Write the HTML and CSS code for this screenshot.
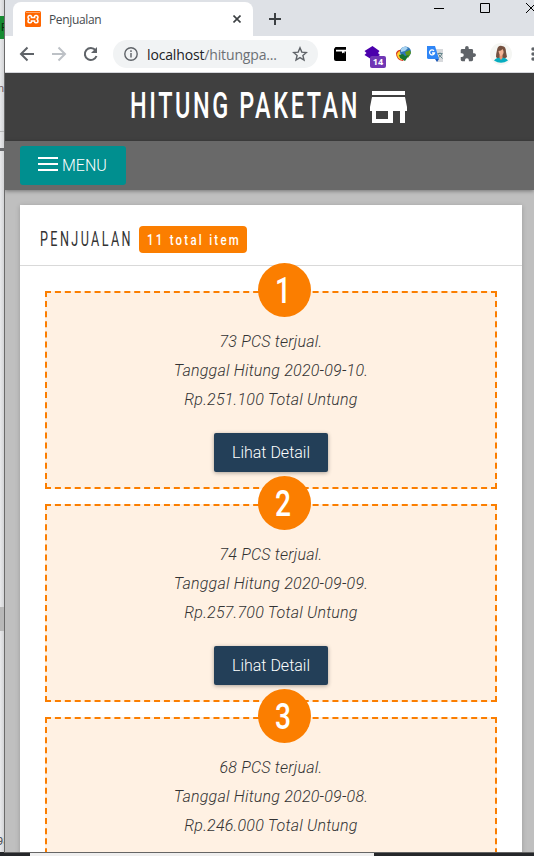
FILE: index.html
```html
<!DOCTYPE html>
<html lang="id">
<head>
<meta charset="utf-8">
<title>Penjualan</title>
<link rel="stylesheet" href="styles.css">
</head>
<body>
<div class="desktop">
  <div class="behind">
    <div class="behind-top"></div>
    <div class="behind-green">F</div>
    <div class="behind-mid">n</div>
    <div class="behind-rule"></div>
    <div class="behind-arrow"></div>
    <div class="behind-thumb"></div>
    <div class="behind-num">98</div>
  </div>
  <div class="window">
    <div class="tabstrip">
      <div class="tab">
        <svg class="favicon" width="16" height="16" viewBox="0 0 16 16"><rect width="16" height="16" rx="1.5" fill="#f60"/><path d="M1 1.500h14" stroke="#ffa365"/><path d="M5.500 4.500h-1q-1.500 0-1.500 1.700T4.500 8Q3 8.300 3 10t1.500 1.700h1Q6.500 11.700 6.500 10h3q0 1.700 1 1.700h1Q13 11.700 13 10t-1.500-2Q13 7.800 13 6.200t-1.500-1.700h-1q-1 0-1 2h-3q0-2-1-2Z" fill="none" stroke="#fff" stroke-width="1.600"/></svg>
        <span class="tab-title">Penjualan</span>
        <svg class="tab-close" width="8" height="8" viewBox="0 0 8 8"><path d="m.5.5 7 7m0-7-7 7" stroke="#3c4043" stroke-width="1.6"/></svg>
      </div>
      <svg class="newtab" width="12" height="12" viewBox="0 0 12 12"><path d="M6 0v12M0 6h12" stroke="#3c4043" stroke-width="2"/></svg>
      <svg class="controls" width="102" height="16" viewBox="0 0 102 16" fill="none" stroke="#000"><path d="M2 8.500h10M48.500 3.500h9v9h-9zM94 3l10 10m0-10-10 10"/></svg>
    </div>
    <div class="toolbar">
      <svg class="nav" width="80" height="20" viewBox="0 0 80 20" fill="none" stroke="#5f6368" stroke-width="2"><path d="M15 10H2m6.500-6.500L2 10l6.500 6.500"/><path d="M33 10h13m-6.500-6.500L46 10l-6.500 6.500" stroke="#bdc1c6"/><path d="M76.500 6.200A6 6 0 1 0 77.500 12"/><path d="M78 3v6h-6z" fill="#5f6368" stroke="none"/></svg>
      <div class="omnibox">
        <svg width="14" height="14" viewBox="0 0 14 14" fill="none" stroke="#5f6368" stroke-width="1.400"><circle cx="7" cy="7" r="6.200"/><path d="M7 6v4.500M7 3.300v1.600"/></svg>
        <span class="url">localhost<span class="path">/hitungpa...</span></span>
        <svg class="star" width="16" height="16" viewBox="0 0 16 16" fill="none" stroke="#5f6368" stroke-width="1.400"><path d="m8 1.800 1.800 4.300 4.600.4-3.500 3 1.100 4.500L8 11.600 4 14l1.100-4.500-3.500-3 4.600-.4z"/></svg>
      </div>
      <div class="exts">
        <svg width="12" height="14" viewBox="0 0 12 14"><path d="M1.500 0H12v14H2a2 2 0 0 1-2-2V2z"/><path d="M2 2.700h10v1.800h-1.500v2l-1.300-1-1.200 1v-2H2z" fill="#fff"/></svg>
        <div class="stack"><svg width="17" height="16" viewBox="0 0 17 16"><path d="m8.500 0 7 5-1.500 2 2 2-7.500 5L.5 9l2-2-2-2z" fill="#4b00ac"/></svg><span class="count">14</span></div>
        <svg class="globe" width="17" height="16" viewBox="0 0 17 16"><path d="M1 7q2-4 6-3L4 8l6 4-2 3Q1 14 1 7Z" fill="#d8341d"/><path d="M2 8q1-3 4-3L4.500 8 9 13l-2 1Q2 13 2 8Z" fill="#ffd22b"/><circle cx="10.500" cy="6" r="5.500" fill="#2f75b7"/><path d="M6 3q3-4 7-1l-3 3-4 1z" fill="#a7d3f1"/><path d="m10 6 5-2 1 3-3 5-2-3z" fill="#5d981a"/><path d="m4 9 4-1 2 2 4-1-4 6-5-3z" fill="#167431"/></svg>
        <svg class="translate" width="17" height="16" viewBox="0 0 17 16"><path d="M6 3h10v13h-6z" fill="#d7d9dc"/><path d="M0 0h8l4 13H1.500A1.500 1.500 0 0 1 0 11.500z" fill="#2f86f6"/><path d="M8 13h4l-2 3z" fill="#1857b8"/><path d="M7 4.800A2.500 2.500 0 1 0 7.500 7H5" fill="none" stroke="#fff" stroke-width="1.300"/><path d="M10.500 7.500h5m-2.500-1v1m2 0q-1 3-3.500 4m0-3 4 4" fill="none" stroke="#66878c"/></svg>
        <svg class="puzzle" width="16" height="16" viewBox="1 1 22 22" fill="#5f6368"><path d="M20.500 11H19V7a2 2 0 0 0-2-2h-4V3.500a2.500 2.500 0 0 0-5 0V5H4a2 2 0 0 0-2 2v3.800h1.500a2.700 2.700 0 0 1 0 5.400H2V20a2 2 0 0 0 2 2h3.800v-1.500a2.700 2.700 0 0 1 5.400 0V22H17a2 2 0 0 0 2-2v-4h1.500a2.500 2.500 0 0 0 0-5z"/></svg>
        <svg class="avatar" width="22" height="22" viewBox="0 0 22 22"><circle cx="11" cy="11" r="11" fill="#f5f6f3"/><path d="M6 14q0-3 1-7 1-5 5-4 4 0 4 6l1 5-3 2H8z" fill="#74503f"/><path d="M4 17.500q2-3 7-3t7 3q-7 4.500-14 0Z" fill="#06adc0"/><path d="M9.500 12h3v3L11 17l-1.500-2z" fill="#e99876"/><path d="M8.500 8q3 0 4-2 1.500 2 1 4-1 3-2.500 3T8.500 8Z" fill="#f4b395"/></svg>
        <svg class="dots" width="4" height="14" viewBox="0 0 4 14" fill="#5f6368"><circle cx="2" cy="2" r="1.700"/><circle cx="2" cy="7" r="1.700"/><circle cx="2" cy="12" r="1.700"/></svg>
      </div>
    </div>
    <div class="page">
      <header class="brand">
        <svg class="brand-name" width="230" height="40"><text x="0" y="33" textLength="230" lengthAdjust="spacingAndGlyphs">HITUNG PAKETAN</text></svg>
        <svg class="shop" width="37" height="33" viewBox="0 0 37 33" fill="#fff"><path d="M2 0h33v4H2zM2 6h33l2 10v4h-2v12h-5V20h-7v12H2V20H0v-4zM6 20v8h12v-8z" fill-rule="evenodd"/></svg>
      </header>
      <nav class="menubar"><button class="menu"><svg width="20" height="14" viewBox="0 0 20 14"><path d="M0 1h20M0 7h20M0 13h20" stroke="#fff" stroke-width="2"/></svg><span>MENU</span></button></nav>
      <main class="card">
        <div class="card-head">
          <svg class="title" width="93" height="26"><text x="0" y="20" textLength="93" lengthAdjust="spacingAndGlyphs">PENJUALAN</text></svg>
          <span class="badge"><svg width="94" height="27"><text x="0" y="19" textLength="94" lengthAdjust="spacingAndGlyphs">11 total item</text></svg></span>
        </div>
        <div class="list">
          <section class="item"><div class="num"><svg width="20" height="40"><text x="10" y="33" textLength="16" lengthAdjust="spacingAndGlyphs">1</text></svg></div><p>73 PCS terjual.</p><p>Tanggal Hitung 2020-09-10.</p><p>Rp.251.100 Total Untung</p><button class="detail">Lihat Detail</button></section>
          <section class="item"><div class="num"><svg width="20" height="40"><text x="10" y="33" textLength="16" lengthAdjust="spacingAndGlyphs">2</text></svg></div><p>74 PCS terjual.</p><p>Tanggal Hitung 2020-09-09.</p><p>Rp.257.700 Total Untung</p><button class="detail">Lihat Detail</button></section>
          <section class="item"><div class="num"><svg width="20" height="40"><text x="10" y="33" textLength="16" lengthAdjust="spacingAndGlyphs">3</text></svg></div><p>68 PCS terjual.</p><p>Tanggal Hitung 2020-09-08.</p><p>Rp.246.000 Total Untung</p><button class="detail">Lihat Detail</button></section>
        </div>
      </main>
    </div>
  </div>
  <div class="taskbar"><div class="taskbar-light"></div></div>
</div>
</body>
</html>
```

FILE: styles.css
```css
* { box-sizing: border-box; }
body { margin: 0; font-family: Roboto, "Liberation Sans", sans-serif; }
svg { display: block; flex: none; }
button { border: 0; font: inherit; }
.desktop { width: 534px; height: 856px; overflow: hidden; display: grid; grid-template-columns: 4px 530px; grid-template-rows: 852px 4px; background: #e2e3e5; }
.behind { display: flex; flex-direction: column; overflow: hidden; background: linear-gradient(90deg, #e8e9eb, #d3d4d6); font-size: 11px; line-height: 24px; }
.behind > div { flex: none; }
.behind-top { height: 16px; }
.behind-green { height: 23px; background: #158b32; color: #062b0e; text-indent: 1px; }
.behind-mid { height: 92px; padding-top: 38px; color: #765e62; text-indent: -2px; }
.behind-rule { height: 1px; background: #b7b8ba; }
.behind-arrow { height: 3px; margin-top: 16px; background: #68696c; }
.behind-thumb { height: 24px; margin-top: 456px; background: #b8b8b8; }
.behind-num { margin-top: 199px; color: #434850; text-indent: -3px; }
.window { border-left: 1px solid #6a6a6a; border-bottom: 1px solid #656565; height: 853px; overflow: hidden; display: flex; flex-direction: column; z-index: 1; }
.tabstrip { height: 36px; flex: none; display: flex; background: #dee1e6; }
.tab { width: 240px; height: 34px; margin: 2px 0 0 8px; padding: 0 12px; display: flex; align-items: center; border-radius: 8px 8px 0 0; background: #fff; }
.tab-title { margin-left: 8px; flex: 1; font: 12px "Open Sans", sans-serif; letter-spacing: -.35px; color: #45494d; }
.newtab { margin: 13px 0 0 16px; }
.controls { margin-left: 151px; flex: none; }
.toolbar { height: 37px; flex: none; display: flex; align-items: center; background: #fff; border-bottom: 1px solid #d5d6db; }
.nav { margin-left: 14px; }
.omnibox { width: 205px; height: 28px; margin-left: 14px; padding: 0 10px 0 11px; display: flex; align-items: center; flex: none; border-radius: 14px; background: #f1f3f4; }
.url { margin-left: 9px; font: 14px "Open Sans", sans-serif; letter-spacing: -.15px; color: #202124; white-space: nowrap; }
.path { color: #6c7074; }
.star { margin-left: auto; }
.exts { margin-left: 16px; display: flex; align-items: center; flex: none; }
.stack { width: 22px; height: 22px; margin: 6px 0 0 18px; position: relative; }
.count { position: absolute; left: 6px; top: 10px; width: 16px; height: 12px; border-radius: 2px; background: #7037b5; color: #fff; font: bold 9px/12px "Open Sans", sans-serif; text-align: center; }
.globe { margin-left: 9px; }
.translate { margin-left: 15px; }
.puzzle { margin-left: 16px; }
.avatar { margin-left: 14px; }
.dots { margin-left: 19px; }
.page { flex: 1; min-height: 0; overflow: hidden; background: #bfbfbf; }
.brand { height: 68px; display: flex; padding: 12px 0 0 125px; background: #404040; }
.brand-name { fill: #fff; font-size: 36.500px; font-weight: 500; letter-spacing: 4px; overflow: visible; }
.shop { margin: 6px 0 0 10px; }
.menubar { height: 49px; padding: 5px 15px; background: #696969; box-shadow: 0 1px 4px #0006; position: relative; }
.menu { width: 106px; height: 39px; padding: 0 18px; display: flex; align-items: center; border-radius: 3px; background: #008f8f; color: #fff; }
.menu span { margin-left: 4px; font-size: 16px; font-weight: 300; }
.menu svg { margin-top: -3px; }
.card { width: 502px; height: 680px; margin: 15px 0 0 15px; background: #fff; box-shadow: 0 1px 5px #0003; }
.card-head { height: 61px; padding: 21px 0 0 20px; display: flex; border-bottom: 1px solid #d9d9d9; }
.title { fill: #333; font-size: 21px; font-weight: 400; letter-spacing: 4px; overflow: visible; }
.badge { width: 108px; height: 27px; margin-left: 6px; padding-left: 8px; border-radius: 4px; background: #fb7e00; }
.badge svg { fill: #fff; font-size: 15px; font-weight: 500; letter-spacing: 3px; overflow: visible; }
.list { padding: 25px; display: flex; flex-direction: column; gap: 15px; }
.item { height: 198px; flex: none; padding-top: 34px; position: relative; border: 2px dashed #fb7e00; background: #fff1e3; text-align: center; }
.num { position: absolute; left: 211px; top: -30px; width: 53px; height: 54px; display: flex; justify-content: center; padding-top: 7px; border-radius: 50%; background: #fb7e00; }
.num svg { margin-left: -3px; fill: #fff; font-size: 36.500px; font-weight: 500; text-anchor: middle; overflow: visible; }
.item p { margin: 0; line-height: 29px; font-size: 16px; font-weight: 300; font-style: italic; letter-spacing: .22px; color: #333; }
.detail { width: 114px; height: 39px; margin-top: 19px; padding: 0; border-radius: 2px; background: #233f58; color: #fff; font-size: 16px; font-weight: 300; box-shadow: 0 1px 4px #0005; }
.taskbar { grid-column: 1 / 3; background: #25272a; padding-left: 30px; }
.taskbar-light { width: 344px; height: 4px; background: #efefef; border-top: 1px solid #a6a6a6; }
```
